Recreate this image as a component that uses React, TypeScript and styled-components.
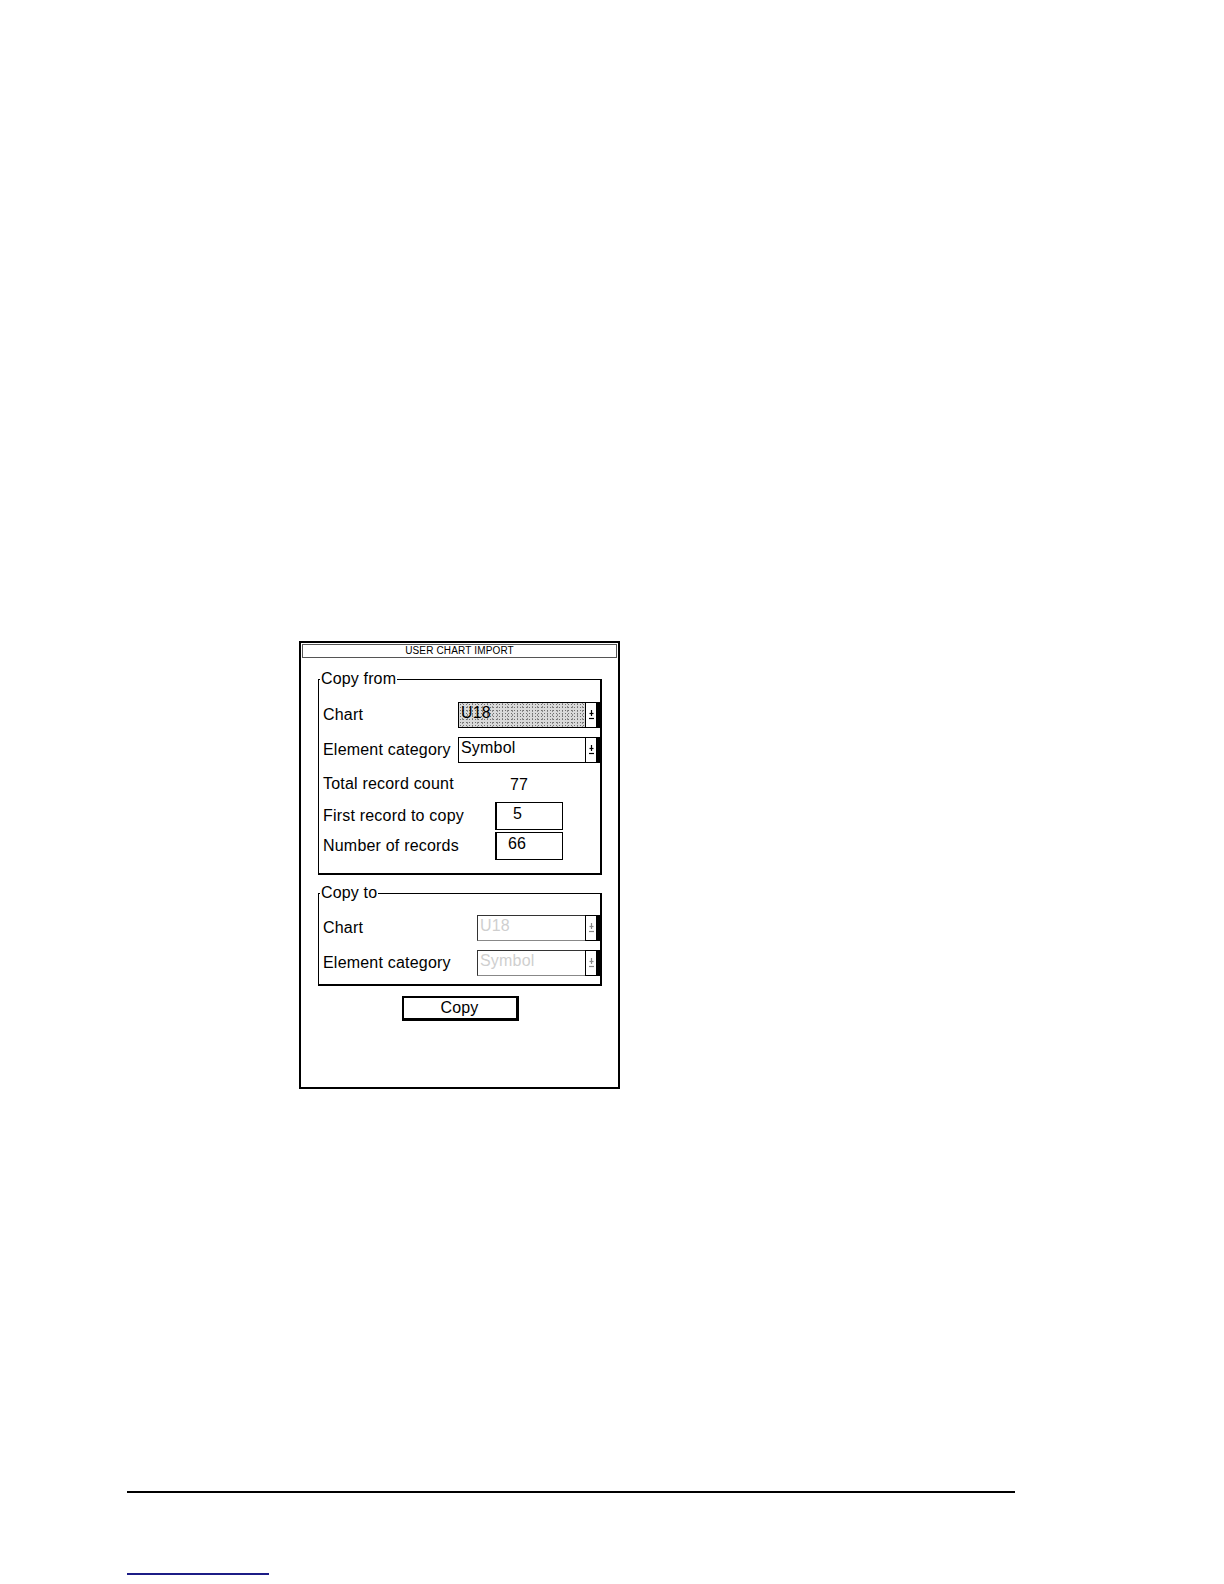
import React from "react";
import styled, { createGlobalStyle } from "styled-components";

const GlobalStyle = createGlobalStyle`
  body {
    margin: 0;
    background: #fff;
    font-family: "Liberation Sans", Arial, sans-serif;
    color: #000;
  }
`;

const Page = styled.div`
  width: 1224px;
  min-height: 1584px;
  padding-top: 641px;
  box-sizing: border-box;
`;

const Dialog = styled.div`
  margin-left: 299px;
  width: 321px;
  height: 448px;
  box-sizing: border-box;
  border: 2px solid #000;
  padding: 1px;
`;

const TitleBar = styled.div`
  height: 14px;
  box-sizing: border-box;
  border: 1px solid #555;
  font-size: 10px;
  line-height: 12px;
  text-align: center;
  letter-spacing: 0.15px;
`;

const Body = styled.div`
  padding: 0 15px 0 16px;
  display: flex;
  flex-direction: column;
`;

const Group = styled.fieldset<{ $top: number; $padTop: number; $padBottom: number }>`
  margin: ${(p) => p.$top}px 0 0 0;
  padding: ${(p) => p.$padTop}px 0 ${(p) => p.$padBottom}px 0;
  border: 1px solid #000;
  border-right-width: 2px;
  border-bottom-width: 2px;
  min-inline-size: 0;
`;

const Legend = styled.legend`
  margin-left: 1px;
  padding: 0 1px;
  font-size: 16px;
  line-height: 18px;
  letter-spacing: 0.15px;
`;

const Row = styled.div<{ $h: number }>`
  display: flex;
  align-items: center;
  height: ${(p) => p.$h}px;
`;

const Label = styled.div<{ $w: number }>`
  width: ${(p) => p.$w}px;
  flex: none;
  box-sizing: border-box;
  padding-left: 4px;
  font-size: 16px;
  letter-spacing: 0.2px;
  white-space: nowrap;
`;

const Value = styled.div`
  font-size: 16px;
  padding-top: 2px;
`;

const Select = styled.div<{ $width: number }>`
  display: flex;
  width: ${(p) => p.$width}px;
  height: 26px;
  box-sizing: border-box;
`;

const SelectField = styled.div<{ $mode: "focus" | "normal" | "disabled" }>`
  flex: 1;
  border: 1px solid ${(p) => (p.$mode === "disabled" ? "#333" : "#000")};
  border-right: none;
  border-bottom-color: ${(p) => (p.$mode === "disabled" ? "#888" : "#000")};
  padding-left: 2px;
  font-size: 16px;
  line-height: 20px;
  letter-spacing: 0.2px;
  color: ${(p) => (p.$mode === "disabled" ? "#cfcfcf" : "#000")};
  background-color: ${(p) => (p.$mode === "focus" ? "#d9d9d9" : "#fff")};
  background-image: ${(p) =>
    p.$mode === "focus"
      ? "radial-gradient(circle, #6e6e6e 0.7px, transparent 0.9px), radial-gradient(circle, #8a8a8a 0.6px, transparent 0.8px)"
      : "none"};
  background-size: 3px 3px, 5px 4px;
  background-position: 0 0, 1px 2px;
`;

const SelectButton = styled.div`
  width: 15px;
  box-sizing: border-box;
  border: 1px solid #000;
  border-right-width: 4px;
  background: #fff;
  display: flex;
  align-items: center;
  justify-content: center;
`;

const NumberBox = styled.div<{ $indent: number }>`
  width: 68px;
  height: 28px;
  box-sizing: border-box;
  border: 1px solid #000;
  border-left-width: 2px;
  padding-left: ${(p) => p.$indent}px;
  font-size: 16px;
  line-height: 22px;
`;

const CopyButton = styled.button`
  align-self: center;
  margin-top: 10px;
  width: 117px;
  height: 25px;
  box-sizing: border-box;
  border: 2px solid #000;
  border-right-width: 3px;
  border-bottom-width: 3px;
  background: #fff;
  padding: 0;
  font-family: "Liberation Sans", Arial, sans-serif;
  font-size: 16px;
  line-height: 18px;
  letter-spacing: 0.2px;
  color: #000;
`;

const Rule = styled.div`
  margin: 402px 0 0 127px;
  width: 888px;
  height: 2px;
  background: #000;
`;

const LinkLine = styled.div`
  margin: 80px 0 0 127px;
  width: 142px;
  height: 2px;
  background: #1c1c86;
`;

const DropGlyph: React.FC<{ dim?: boolean }> = ({ dim }) => (
  <svg width="7" height="11" viewBox="0 0 7 11">
    <g stroke={dim ? "#888" : "#000"} strokeWidth="1.2" fill="none">
      <path d="M3.5 1v6" />
      <path d="M1.5 4.5h4" />
      <path d="M1 9.5h5" />
    </g>
  </svg>
);

const Dropdown: React.FC<{ width: number; value: string; mode: "focus" | "normal" | "disabled" }> = ({
  width,
  value,
  mode,
}) => (
  <Select $width={width}>
    <SelectField $mode={mode}>{value}</SelectField>
    <SelectButton>
      <DropGlyph dim={mode === "disabled"} />
    </SelectButton>
  </Select>
);

export default function App() {
  return (
    <>
      <GlobalStyle />
      <Page>
        <Dialog>
          <TitleBar>USER CHART IMPORT</TitleBar>
          <Body>
            <Group $top={12} $padTop={9} $padBottom={12}>
              <Legend>Copy from</Legend>
              <Row $h={35}>
                <Label $w={139}>Chart</Label>
                <Dropdown width={143} value="U18" mode="focus" />
              </Row>
              <Row $h={35}>
                <Label $w={139}>Element category</Label>
                <Dropdown width={143} value="Symbol" mode="normal" />
              </Row>
              <Row $h={34}>
                <Label $w={191}>Total record count</Label>
                <Value>77</Value>
              </Row>
              <Row $h={30}>
                <Label $w={176}>First record to copy</Label>
                <NumberBox $indent={16}>5</NumberBox>
              </Row>
              <Row $h={30}>
                <Label $w={176}>Number of records</Label>
                <NumberBox $indent={11}>66</NumberBox>
              </Row>
            </Group>
            <Group $top={9} $padTop={8} $padBottom={4}>
              <Legend>Copy to</Legend>
              <Row $h={35}>
                <Label $w={158}>Chart</Label>
                <Dropdown width={124} value="U18" mode="disabled" />
              </Row>
              <Row $h={35}>
                <Label $w={158}>Element category</Label>
                <Dropdown width={124} value="Symbol" mode="disabled" />
              </Row>
            </Group>
            <CopyButton>Copy</CopyButton>
          </Body>
        </Dialog>
        <Rule />
        <LinkLine />
      </Page>
    </>
  );
}
